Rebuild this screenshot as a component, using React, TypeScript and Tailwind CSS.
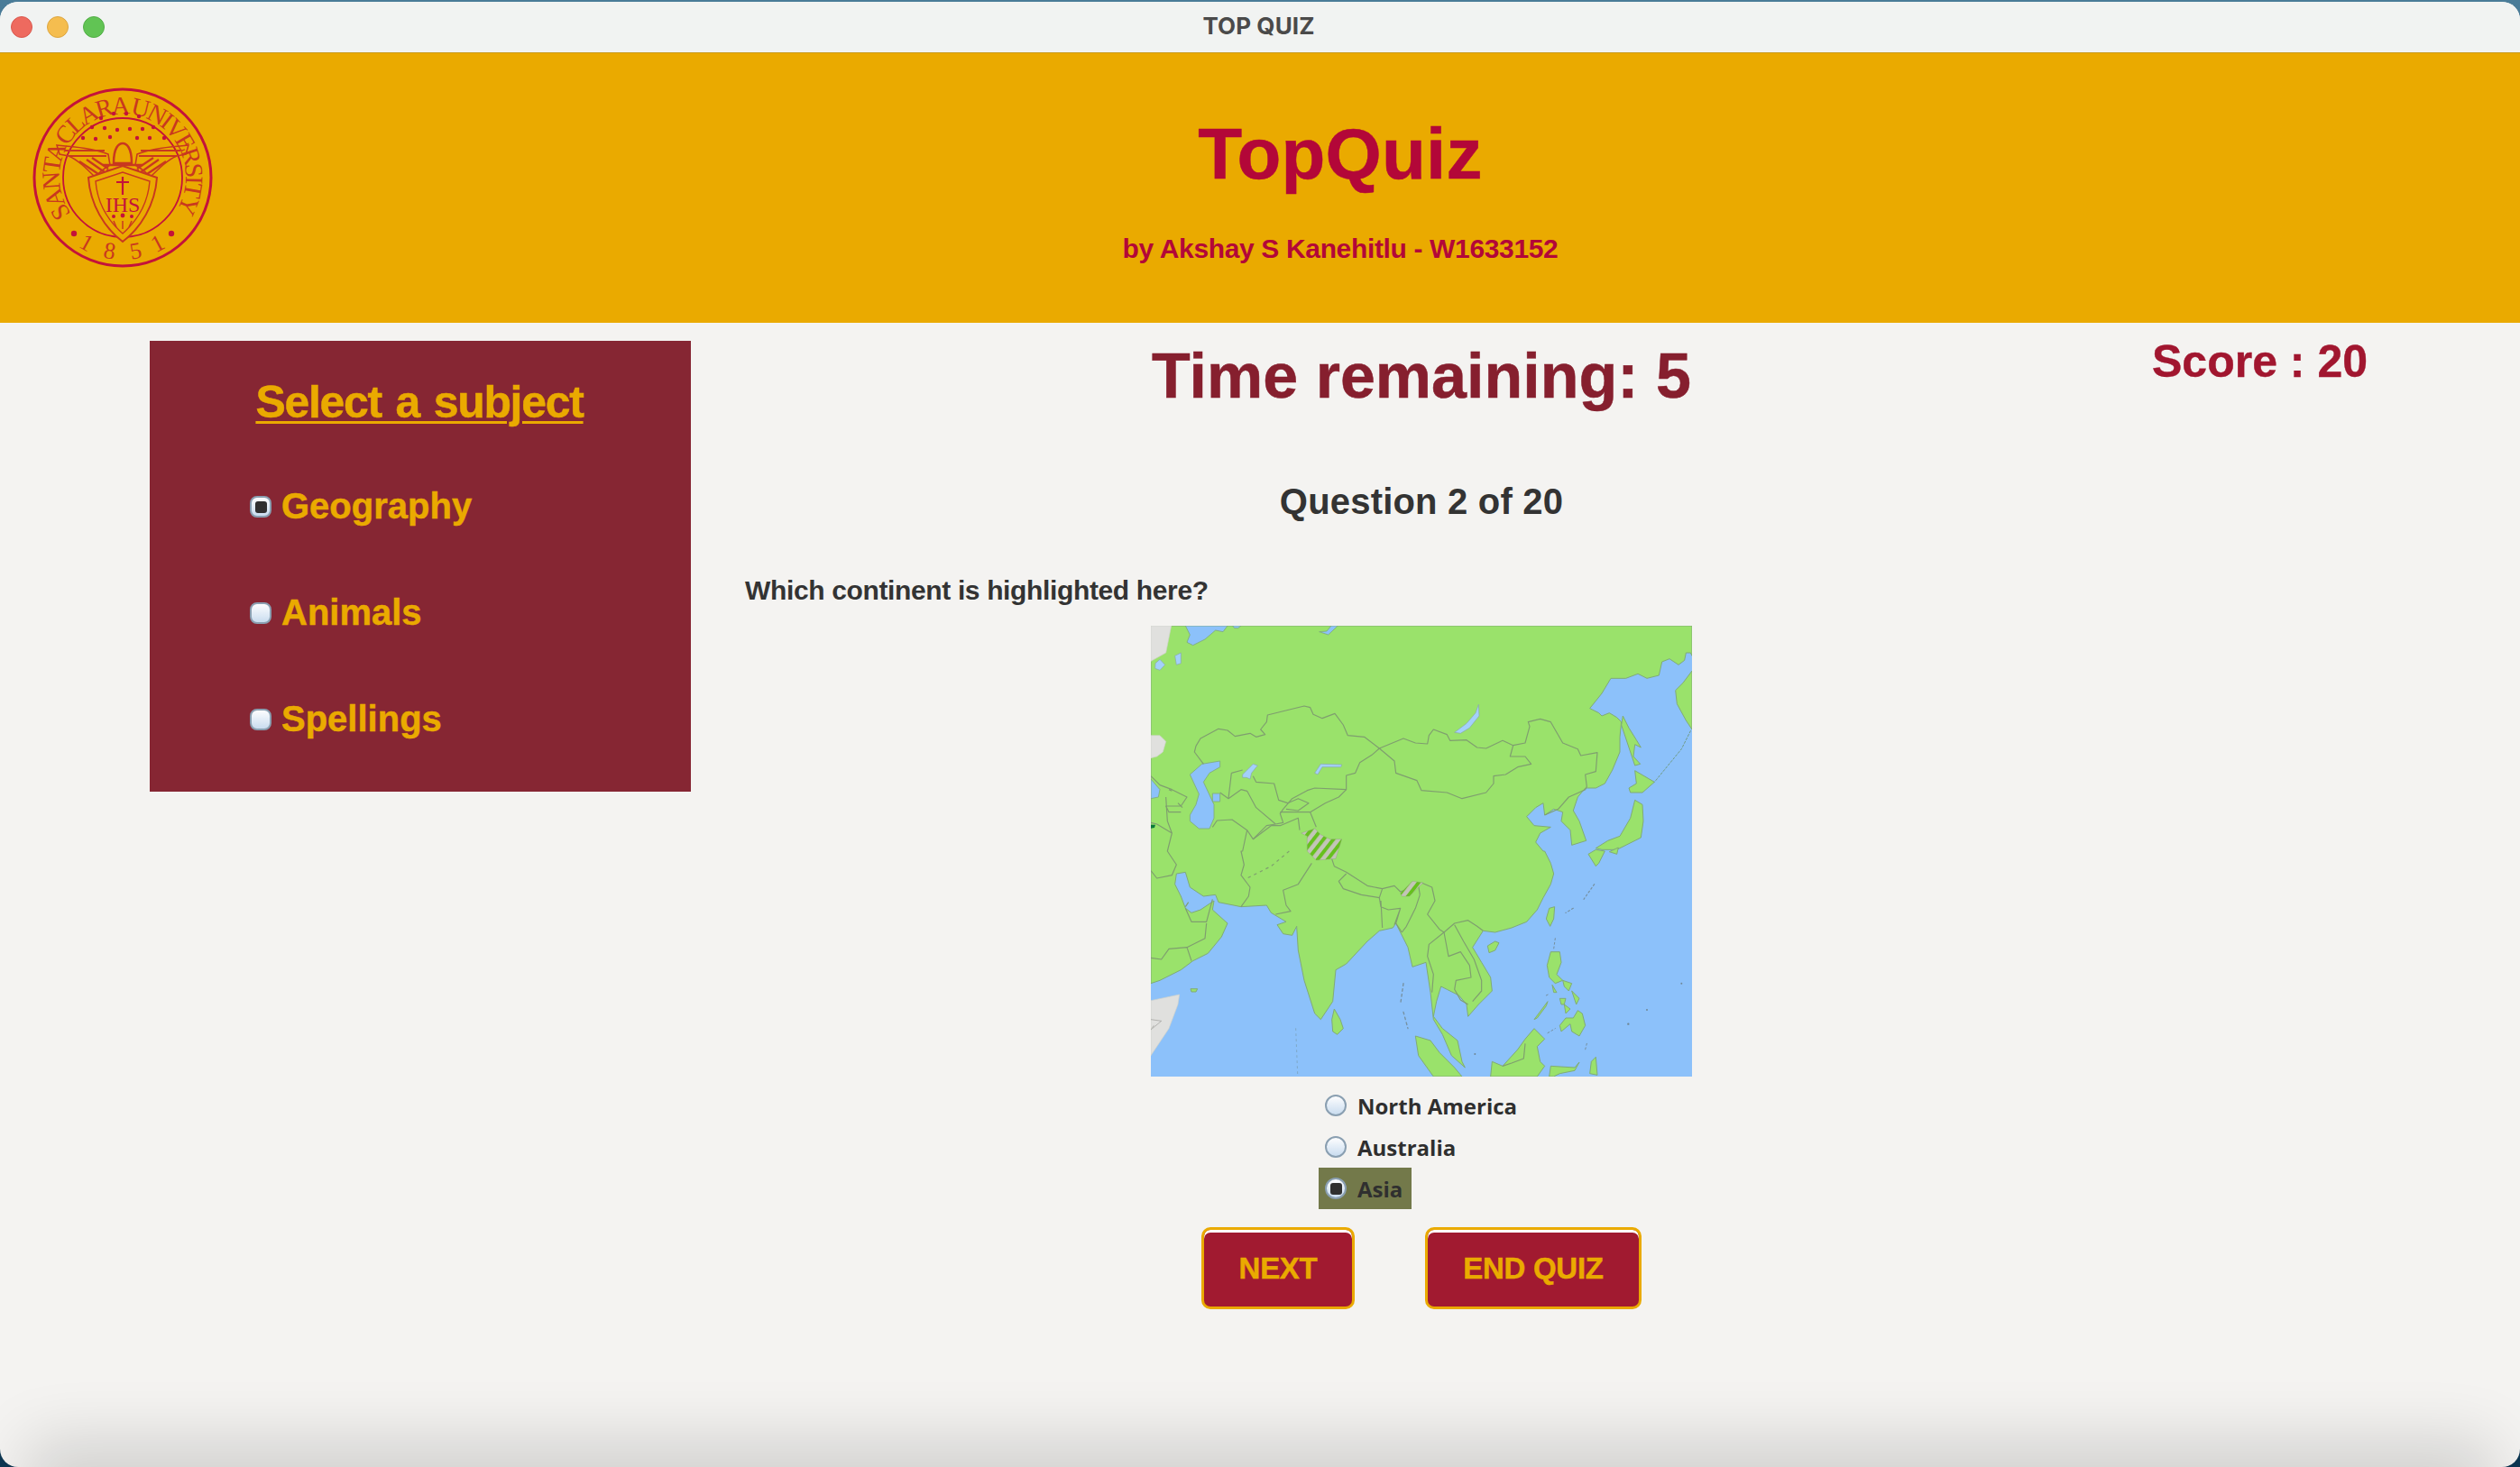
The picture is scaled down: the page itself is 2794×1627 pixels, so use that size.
const sans = "font-['Liberation_Sans',Arial,sans-serif]";

function Radio({ checked, square }: { checked?: boolean; square?: boolean }) {
  return (
    <span
      className={`flex h-[24px] w-[24px] shrink-0 items-center justify-center border-2 border-[#8a9fb1] bg-gradient-to-b from-[#fdfdfe] to-[#c9dcef] ${square ? "rounded-[8px]" : "rounded-full"}`}
    >
      {checked && <span className="h-[13px] w-[13px] rounded-[3px] bg-[#303030]" />}
    </span>
  );
}

function Subject({ label, checked }: { label: string; checked?: boolean }) {
  return (
    <div className="flex h-[118px] items-center gap-[11px] pl-[111px]">
      <Radio checked={checked} square />
      <span className="-mt-[3px] text-[40px] font-bold tracking-[0px] text-[#eaaa00] [-webkit-text-stroke:0.5px_#eaaa00]">{label}</span>
    </div>
  );
}

function Answer({ label, checked }: { label: string; checked?: boolean }) {
  return (
    <div className={`flex h-[46px] w-fit items-center gap-[12px] pl-[7px] pr-[10px] ${checked ? "bg-[#73794a]" : ""}`}>
      <Radio checked={checked} />
      <span className="mt-[2px] whitespace-nowrap font-['Open_Sans',sans-serif] text-[24px] font-bold text-[#2f2f2f]">{label}</span>
    </div>
  );
}

function Seal() {
  const c = "#c4123a";
  const t = "#c9381f";
  const dots = [
    [76, 34],[90, 29],[104, 29],[118, 32],[66, 44],[80, 45],[94, 47],[108, 46],[122, 46],[134, 44],[56, 56],[70, 57],[86, 55],[116, 56],[130, 56],[146, 56],
  ];
  return (
    <svg viewBox="0 0 200 200" className="h-[200px] w-[200px]">
      <defs>
        <path id="sealIn" d="M 43 140 A 70 70 0 1 1 157 140" />
      </defs>
      <circle cx="100" cy="100" r="98" fill="none" stroke={c} strokeWidth="3" />
      <circle cx="100" cy="100" r="66" fill="none" stroke={c} strokeWidth="1.8" />
      <text fontFamily="'Liberation Serif',serif" fontSize="28" fill={t} letterSpacing="-3">
        <textPath href="#sealIn" startOffset="0">SANTA CLARA UNIVERSITY</textPath>
      </text>
      {[
        ["1", 29],
        ["8", 10],
        ["5", -10],
        ["1", -28],
      ].map(([d, a], i) => (
        <text key={i} x="100" y="191" textAnchor="middle" fontFamily="'Liberation Serif',serif" fontSize="26" fill={t} transform={`rotate(${a} 100 100)`}>
          {d}
        </text>
      ))}
      <circle cx="46" cy="162" r="3.2" fill={c} />
      <circle cx="154" cy="162" r="3.2" fill={c} />
      {dots.map(([x, y], i) => (
        <circle key={i} cx={x} cy={y} r="2.2" fill={c} />
      ))}
      <g fill="none" stroke={t} strokeWidth="1.6">
        <path d="M27 64 C50 66 68 68 84 74 L86 86 C76 92 72 96 70 100 C60 90 50 80 40 76 L30 74 Z" />
        <path d="M173 64 C150 66 132 68 116 74 L114 86 C124 92 128 96 130 100 C140 90 150 80 160 76 L170 74 Z" />
        <path d="M36 70 H80 M40 76 H82 M52 82 L76 98 M60 80 L80 94 M66 78 L84 90 M164 70 H120 M160 76 H118 M148 82 L124 98 M140 80 L120 94 M134 78 L116 90" strokeWidth="2.2" />
        <path d="M90 84 C90 66 96 62 100 62 C104 62 110 66 110 84 Z" strokeWidth="2.5" />
        <path d="M78 86 L122 86 M82 92 L118 92" strokeWidth="2.5" />
      </g>
      <path d="M62 100 L100 87 L138 100 C136 130 120 156 100 171 C80 156 64 130 62 100 Z" fill="#eaaa00" stroke={t} strokeWidth="2" />
      <path d="M70 104 L100 94 L130 104 C128 128 116 148 100 162 C84 148 72 128 70 104 Z" fill="none" stroke={t} strokeWidth="1.4" />
      <path d="M100 99 V119 M93 105 H107" stroke={c} strokeWidth="2.2" fill="none" />
      <text x="100" y="138" textAnchor="middle" fontFamily="'Liberation Serif',serif" fontSize="24" fill={c}>IHS</text>
      <g fill={c}>
        <circle cx="90" cy="143" r="2" />
        <circle cx="100" cy="142" r="2.4" />
        <circle cx="110" cy="143" r="2" />
      </g>
      <path d="M90 148 L93 155 M100 148 V157 M110 148 L107 155" stroke={t} strokeWidth="1.5" fill="none" />
    </svg>
  );
}

const MAIN_LAND =
  "M0 0 H1800 V100 L1795 90 L1780 90 L1775 115 L1755 130 L1725 110 L1700 120 L1690 165 L1650 175 L1620 160 L1580 175 L1530 175 L1500 225 L1460 275 L1490 290 L1500 300 L1525 290 L1550 305 L1565 320 L1560 370 L1560 420 L1535 480 L1510 525 L1480 540 L1445 540 L1420 570 L1405 615 L1425 650 L1448 715 L1400 730 L1395 680 L1365 650 L1370 620 L1340 610 L1310 630 L1305 590 L1280 605 L1250 635 L1275 665 L1330 670 L1295 690 L1280 720 L1305 750 L1310 750 L1330 790 L1340 825 L1330 860 L1305 905 L1285 945 L1250 985 L1200 1005 L1145 1020 L1105 1015 L1070 1070 L1100 1120 L1130 1170 L1135 1215 L1090 1260 L1055 1300 L1050 1260 L1025 1230 L985 1210 L965 1200 L950 1250 L940 1300 L970 1340 L1020 1380 L1035 1450 L1045 1470 L1000 1430 L970 1360 L940 1310 L930 1220 L915 1120 L900 1125 L870 1135 L855 1070 L830 1020 L815 990 L805 1005 L760 1015 L720 1050 L650 1125 L615 1145 L605 1250 L565 1310 L545 1290 L510 1180 L490 1080 L485 1000 L470 1030 L440 1025 L420 995 L450 985 L400 955 L385 930 L300 935 L225 920 L215 895 L175 900 L130 870 L115 820 L85 825 L80 860 L100 900 L115 940 L135 955 L165 945 L210 915 L205 945 L255 990 L235 1035 L190 1090 L140 1115 L100 1145 L30 1180 L0 1190 Z";

function AsiaMap() {
  const land = "#9ae26b";
  const sea = "#8cc1fa";
  const lake = "#a3d0fb";
  const coast = "#80ab77";
  const line = "#7f9e6f";
  const grey = "#e0e0de";
  return (
    <svg viewBox="0 0 1800 1500" className="h-[500px] w-[600px] blur-[0.5px]">
      <defs>
        <pattern id="hatch" width="26" height="26" patternUnits="userSpaceOnUse" patternTransform="rotate(38)">
          <rect width="26" height="26" fill="#c3c5b8" />
          <rect width="12" height="26" fill="#66c01e" />
        </pattern>
      </defs>
      <rect width="1800" height="1500" fill={sea} />
      <path d={MAIN_LAND} fill={land} stroke={coast} strokeWidth="3" strokeLinejoin="round" />

      <g fill={grey} stroke="#cfd2ca" strokeWidth="2">
        <path d="M0 0 H68 L60 40 L50 90 L0 118 Z" />
        <path d="M0 365 L30 365 L50 385 L40 420 L20 435 L0 440 Z" />
        <path d="M0 1247 L95 1227 L90 1260 L60 1340 L0 1430 Z" />
      </g>
      <path d="M0 1310 L35 1315 L5 1340 M10 1330 L0 1345" fill="none" stroke="#9a9a96" strokeWidth="2" />

      {/* inland seas and lakes */}
      <g fill={sea} stroke={coast} strokeWidth="2.5" strokeLinejoin="round">
        <path d="M115 0 L130 30 L120 55 L140 65 L180 45 L215 15 L240 20 L255 0 Z" />
        <path d="M272 0 H300 L290 8 L278 8 Z" />
        <path d="M560 20 L590 30 L622 0 H600 L585 18 Z" />
        <path d="M0 510 L30 545 L25 570 L0 575 Z" />
        <path d="M130 495 L170 460 L230 450 L230 470 L195 490 L175 520 L210 595 L210 640 L195 675 L160 675 L130 650 L130 630 L150 595 L160 560 Z" />
        <path d="M205 558 H230 V585 H205 Z" />
      </g>
      <g fill={lake} stroke="#8aa8a8" strokeWidth="2" strokeLinejoin="round">
        <path d="M15 125 L30 112 L47 130 L30 148 L14 142 Z" />
        <path d="M80 100 L100 90 L100 125 L85 130 Z" />
        <path d="M545 490 L565 460 L635 462 L632 470 L570 470 L555 495 Z" />
        <path d="M305 495 L340 460 L355 465 L335 490 L330 510 L318 505 L305 505 Z" />
        <path d="M1010 355 L1050 325 L1080 290 L1090 262 L1092 300 L1060 340 L1030 358 Z" />
      </g>

      {/* islands */}
      <g fill={land} stroke={coast} strokeWidth="3" strokeLinejoin="round">
        <path d="M1800 150 L1770 190 L1745 215 L1750 260 L1780 315 L1800 345 Z" />
        <path d="M1570 300 L1590 340 L1615 380 L1630 405 L1610 395 L1605 435 L1628 460 L1610 465 L1595 420 L1565 330 Z" />
        <path d="M1610 482 L1675 520 L1635 555 L1595 555 L1590 540 L1615 525 Z" />
        <path d="M1610 580 L1635 595 L1638 650 L1630 705 L1590 725 L1550 745 L1500 745 L1480 740 L1520 715 L1560 700 L1595 640 L1605 600 Z" />
        <path d="M1480 745 L1510 750 L1490 790 L1480 800 L1455 760 Z" />
        <path d="M1525 752 L1555 738 L1550 760 Z" />
        <path d="M610 1275 L630 1310 L640 1340 L620 1360 L605 1350 L602 1310 Z" />
        <path d="M132 1208 L155 1208 L150 1218 L135 1218 Z" />
        <g transform="translate(900 750)">
          <path d="M425 190 L443 185 L440 225 L428 250 L415 225 Z" />
          <path d="M220 315 L245 300 L258 305 L245 330 L225 338 Z" />
          <path d="M430 335 L460 335 L465 370 L450 410 L470 430 L445 440 L425 420 L418 380 Z" />
          <path d="M435 445 L450 470 L440 470 Z" />
          <path d="M460 490 L480 490 L475 510 L465 510 Z" />
          <path d="M500 465 L525 490 L515 510 Z" />
          <path d="M475 510 L495 525 L480 540 Z" />
          <path d="M470 430 L500 440 L490 465 L475 450 Z" />
          <path d="M520 530 L535 540 L545 580 L525 615 L500 600 L495 575 L465 600 L460 580 L480 555 L505 555 Z" />
          <path d="M375 560 L420 500 L415 515 L385 555 Z" />
          <path d="M230 750 L235 700 L270 715 L320 660 L345 625 L375 590 L410 625 L385 650 L395 700 L410 715 L385 750 Z" />
          <path d="M425 750 L430 715 L510 720 L525 702 L510 730 L460 740 L440 750 Z" />
          <path d="M565 700 L580 685 L585 745 L560 740 Z" />
        </g>
        <path d="M880 1365 L930 1380 L960 1420 L1010 1470 L1035 1500 L940 1500 L890 1430 Z" />
      </g>

      {/* borders */}
      <g fill="none" stroke={line} strokeWidth="3.5" strokeLinejoin="round">
        <path d="M175 460 L145 420 L150 400 L165 375 L225 343 L255 348 L280 368 L330 358 L350 370 L380 362 L365 345 L385 320 L388 297 L510 267 L530 272 L540 295 L570 308 L612 292 L640 330 L655 365 L710 370 L760 408 L840 375 L880 390 L920 393 L925 365 L940 345 L985 362 L995 382 L1050 380 L1085 405 L1115 408 L1170 382 L1205 398 L1245 390 L1260 335 L1255 320 L1295 310 L1330 320 L1370 390 L1420 410 L1430 432 L1485 422 L1480 485 L1445 495 L1450 535 L1445 545 L1390 570 L1355 610 L1310 630" />
        <path d="M1205 398 L1195 435 L1245 435 L1265 460 L1220 470 L1180 495 L1140 500 L1140 525 L1115 555 L1035 575 L985 555 L900 548 L885 515 L815 490 L810 450 L760 408" />
        <path d="M760 408 L735 430 L695 455 L680 490 L650 498 L650 545 L625 570 L580 590 L530 620 L550 670" />
        <path d="M650 545 L545 540 L520 548 L470 575 L440 610 L430 625 L440 655 L415 660" />
        <path d="M340 500 L350 520 L410 525 L425 580 L455 590 L490 575 L525 590 L490 615 L450 610 M530 620 L470 620 L430 620" />
        <path d="M268 490 L305 480 M268 490 L258 575 L300 545 L320 550 L350 605 L415 660 M258 575 L230 555" />
        <path d="M415 660 L385 665 L340 710 L320 680 L270 645 L220 648 L205 670 M320 680 L305 750 L300 750 L310 795 L300 830 L330 870 L325 900 L300 935" />
        <path d="M340 710 L400 665 L430 665 L490 640 L495 680" />
        <path d="M460 750 L400 800 L320 840" strokeDasharray="10 12" />
        <path d="M535 790 L490 860 L440 880 L450 930 L465 950 L415 960" />
        <path d="M50 570 L55 650 L70 690 L55 750 L85 795 L70 830 L20 840 L0 815 M70 690 L20 660 L0 655" />
        <path d="M0 500 L30 530 L70 545 L120 570 L100 600 L50 600 L60 620 L100 620 M60 545 L70 550 M90 590 L105 605" />
        <path d="M600 770 L610 800 L650 820 L720 865 L770 875 L810 865 L830 885 L890 865 L895 895 M650 825 L625 850 L640 875 L700 895 L760 905 L770 875" />
        <path d="M760 905 L765 935 L790 945 L830 940 L810 995 M765 915 L770 1005 M830 940 L815 990 L835 1020 M895 895 L880 940 L850 1000 L835 1020" />
        <g transform="translate(900 750)">
          <path d="M0 105 L35 120 L45 165 L20 210 L60 260 L75 270 L110 240 L155 230 L185 250 L205 265" />
          <path d="M75 270 L25 310 L20 350 L40 410 L35 470" />
          <path d="M75 270 L90 350 L130 335 L160 380 L165 420 L115 430 L110 460 L130 495 L155 510" />
          <path d="M110 245 L140 300 L175 360 L200 430 L200 465 L170 500" />
          <path d="M270 715 L300 705 L340 690 L345 640" />
        </g>
        <g transform="translate(0 750)">
          <path d="M205 160 L185 235 L135 235 L115 190 M185 240 L180 290 L120 320 L60 325 L35 360 L0 355 M120 320 L135 365 M125 170 L115 185" />
        </g>
      </g>

      {/* small island chains */}
      <g fill="none" strokeLinecap="round">
        <path d="M1795 350 L1765 410 L1720 465 L1675 520" stroke="#6f9b84" strokeWidth="3" strokeDasharray="7 6" />
        <path d="M840 1190 L830 1260 M840 1285 L855 1340" stroke="#7690a0" strokeWidth="4" strokeDasharray="8 10" />
        <path d="M482 1340 L488 1490" stroke="#7ea8c8" strokeWidth="3" strokeDasharray="6 12" />
        <path d="M1475 860 L1440 910 M1405 940 L1380 955" stroke="#7690a0" strokeWidth="3.5" strokeDasharray="6 8" />
        <path d="M1345 1040 L1340 1075 M1315 1230 L1325 1225 M1320 1355 L1345 1340 M1450 1390 L1445 1410" stroke="#7690a0" strokeWidth="3" strokeDasharray="6 8" />
      </g>
      <g fill="#6f8796">
        <circle cx="1588" cy="1325" r="3.5" />
        <circle cx="1765" cy="1190" r="3" />
        <circle cx="1650" cy="1278" r="3" />
        <circle cx="1078" cy="1425" r="3" />
      </g>

      <g fill="url(#hatch)" stroke="#8d9180" strokeWidth="1">
        <path d="M500 690 L545 675 L565 695 L595 710 L635 710 L615 775 L550 780 L520 750 L520 700 Z" />
        <path d="M830 890 L870 850 L905 855 L860 900 L835 900 Z" />
      </g>
      <path d="M0 662 H15 L12 672 L0 674 Z" fill="#0c7a3a" />
    </svg>
  );
}

export default function App() {
  return (
    <div className={`relative h-[1627px] w-[2794px] overflow-hidden bg-gradient-to-b from-[#4a7c98] to-[#0c3550] pt-[2px] ${sans}`}>
      <div className="relative flex h-[1625px] flex-col overflow-hidden rounded-[20px] bg-[#f4f3f1]">
        <div className="grid h-[57px] shrink-0 grid-cols-[1fr_auto_1fr] items-center border-b border-[#c99a1c] bg-[#f1f3f2] px-[12px]">
          <div className="flex gap-[16px]">
            <span className="h-[24px] w-[24px] rounded-full border border-[#d9584e] bg-[#ee6a5f]" />
            <span className="h-[24px] w-[24px] rounded-full border border-[#dca540] bg-[#f5bd4f]" />
            <span className="h-[24px] w-[24px] rounded-full border border-[#52ad47] bg-[#61c454]" />
          </div>
          <span className="mb-[3px] mr-[3px] font-['Inter',sans-serif] text-[26px] font-bold tracking-[0.1px] text-[#4a4a4a]">TOP QUIZ</span>
        </div>

        <header className="flex h-[299px] shrink-0 items-start bg-[#eaaa00] pl-[36px] pr-[58px] pt-[38px]">
          <Seal />
          <div className="flex flex-1 flex-col items-center">
            <h1 className="mt-[28px] text-[80px] font-bold leading-[92px] tracking-[0.2px] text-[#b30738] [-webkit-text-stroke:0.5px_#b30738]">TopQuiz</h1>
            <p className="mt-[41px] text-[30px] font-bold leading-[36px] tracking-[-0.35px] text-[#b30738]">by Akshay S Kanehitlu - W1633152</p>
          </div>
        </header>

        <main className="flex flex-1 items-start">
          <aside className="ml-[166px] mt-[20px] h-[500px] w-[600px] shrink-0 bg-[#862633]">
            <h2 className="pb-[27px] pr-[2px] pt-[38px] text-center text-[50px] font-bold leading-[60px] tracking-[-1.3px] text-[#eaaa00] underline decoration-[3px] underline-offset-[4px] [-webkit-text-stroke:0.5px_#eaaa00] [word-spacing:3px]">
              Select a subject
            </h2>
            <Subject label="Geography" checked />
            <Subject label="Animals" />
            <Subject label="Spellings" />
          </aside>

          <section className="ml-[60px] flex w-[1500px] shrink-0 flex-col">
            <h2 className="h-[118px] text-center text-[70px] font-bold leading-[118px] text-[#861f2e] [-webkit-text-stroke:0.5px_#861f2e]">Time remaining: 5</h2>
            <h3 className="h-[160px] text-center text-[40px] font-bold leading-[160px] tracking-[0.2px] text-[#333333]">Question 2 of 20</h3>
            <p className="mb-[20px] h-[38px] text-[30px] font-bold leading-[38px] tracking-[-0.36px] text-[#333333]">Which continent is highlighted here?</p>
            <div className="flex justify-center">
              <AsiaMap />
            </div>
            <div className="mt-[9px] flex justify-center">
              <div className="flex w-[228px] flex-col">
                <Answer label="North America" />
                <Answer label="Australia" />
                <Answer label="Asia" checked />
              </div>
            </div>
            <div className="mt-[20px] flex justify-center gap-[78px]">
              <button className="h-[91px] w-[170px] rounded-[10px] border-[3px] border-[#eaaa00] bg-[#a11a30] text-[33px] font-bold tracking-[-0.3px] text-[#eaaa00] shadow-[inset_0_3px_0_#ffffff] [-webkit-text-stroke:0.5px_#eaaa00]">
                NEXT
              </button>
              <button className="h-[91px] w-[240px] rounded-[10px] border-[3px] border-[#eaaa00] bg-[#a11a30] text-[33px] font-bold tracking-[-0.3px] text-[#eaaa00] shadow-[inset_0_3px_0_#ffffff] [-webkit-text-stroke:0.5px_#eaaa00]">
                END QUIZ
              </button>
            </div>
          </section>

          <div className="ml-[60px] mt-[18px] text-[50px] font-bold leading-[50px] text-[#a1162f] [-webkit-text-stroke:0.4px_#a1162f]">Score : 20</div>
        </main>

        <div className="absolute -bottom-[40px] left-[60px] right-[60px] h-[40px] shadow-[0_0_70px_30px_rgba(0,0,0,0.14)]" />
      </div>
    </div>
  );
}
